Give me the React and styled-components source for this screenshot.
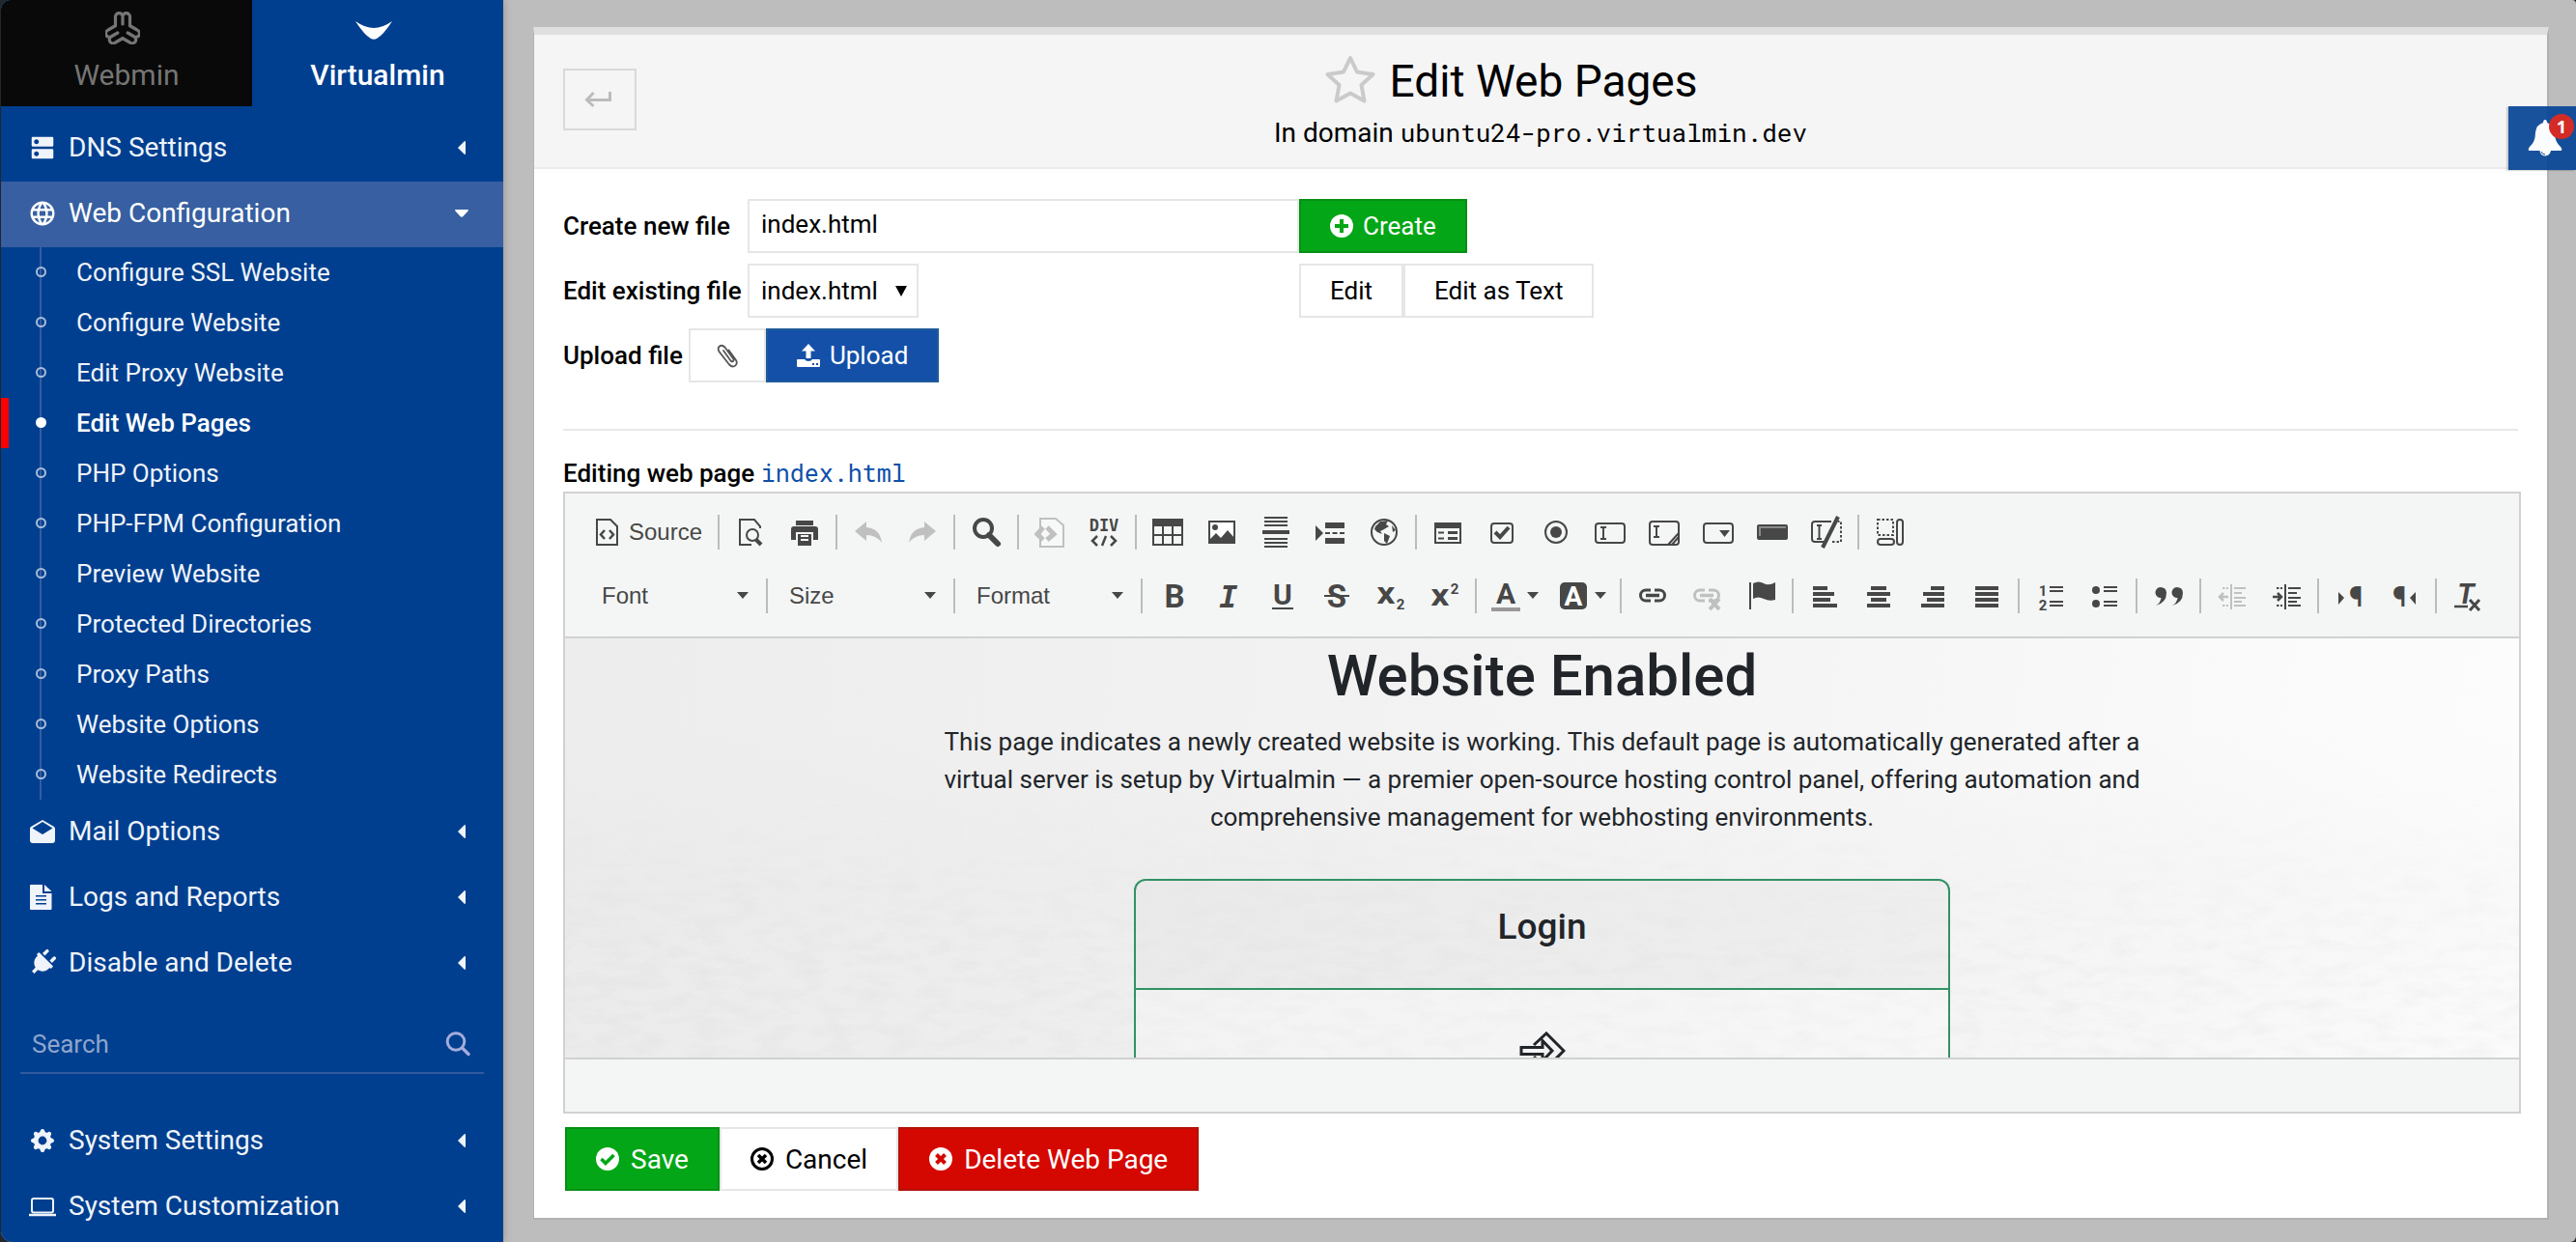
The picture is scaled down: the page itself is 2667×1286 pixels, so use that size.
import React from "react";
import styled, { createGlobalStyle, css } from "styled-components";
import { MdDns, MdLanguage } from "react-icons/md";
import { FaPlug } from "react-icons/fa";
import { BsGearFill } from "react-icons/bs";

const sans = `Roboto, "Liberation Sans", sans-serif`;
const mono = `"Roboto Mono", "DejaVu Sans Mono", monospace`;
const ink = "#474747";

const GlobalStyle = createGlobalStyle`
  *, *::before, *::after { box-sizing: border-box; }
  body { margin: 0; background: #20272e; font-family: ${sans}; font-size: 26px; color: #000; }
  button, input, select { font: inherit; color: inherit; border-radius: 0; margin: 0; }
  button { cursor: pointer; }
  a { color: inherit; text-decoration: none; }
  svg { display: block; flex: none; }
`;

/* ---------- shell ---------- */

const Shell = styled.div`
  display: flex;
  min-height: 100vh;
  margin-left: 1px;
  background: #bdbdbd;
  border-radius: 10px 4px 6px 12px;
  overflow: hidden;
`;

const Sidebar = styled.aside`
  flex: none;
  width: 520px;
  background: #003f8f;
  color: #eff3fa;
  box-shadow: 0 0 8px rgba(0, 0, 0, 0.25);
`;

const Main = styled.main`
  flex: 1;
  min-width: 0;
  padding: 28px 28px 22px 31px;
`;

/* ---------- sidebar ---------- */

const Tabs = styled.div`
  display: grid;
  grid-template-columns: 1fr 1fr;
  margin-bottom: 10px;
`;

const Tab = styled.a`
  display: flex;
  flex-direction: column;
  align-items: center;
  height: 110px;
  padding-top: 12px;
  font-size: 30px;
  line-height: 36px;
  font-weight: ${(p) => (p.$active ? 500 : 400)};
  color: ${(p) => (p.$active ? "#fff" : "#757575")};
  background: ${(p) => (p.$active ? "transparent" : "#090909")};
  svg {
    margin: 0 8px 14px 0;
  }
`;

const List = styled.ul`
  list-style: none;
  margin: 0;
  padding: 0;
`;

const Group = styled.button`
  display: flex;
  align-items: center;
  width: 100%;
  height: 68px;
  padding: 0 36px 3px 30px;
  border: 0;
  font-size: 28px;
  text-align: left;
  color: ${(p) => (p.$open ? "#fff" : "inherit")};
  background: ${(p) => (p.$open ? "#375fa1" : "transparent")};
`;

const GroupIcon = styled.span`
  display: flex;
  justify-content: center;
  width: 26px;
  margin-right: 14px;
`;

const GroupLabel = styled.span`
  flex: 1;
`;

const SubList = styled(List)`
  background: linear-gradient(#345d9f, #345d9f) 40px 0 / 2px 100% no-repeat;
`;

const SubLink = styled.a`
  display: flex;
  align-items: center;
  height: 52px;
  padding: 0 0 1px ${(p) => (p.$current ? 28 : 36)}px;
  border-left: ${(p) => (p.$current ? "8px solid #f00" : "0")};
  font-weight: ${(p) => (p.$current ? 500 : 400)};
  color: ${(p) => (p.$current ? "#fff" : "inherit")};
`;

const Bullet = styled.span`
  width: 11px;
  height: 11px;
  margin-right: 31px;
  border: 2px solid ${(p) => (p.$current ? "#fff" : "#a9bcd9")};
  border-radius: 50%;
  background: ${(p) => (p.$current ? "#fff" : "transparent")};
`;

const SearchBox = styled.label`
  display: flex;
  align-items: center;
  height: 60px;
  margin: 20px 20px 36px;
  padding: 0 14px 0 12px;
  border-bottom: 2px solid #315a9e;
  color: #a3addb;
`;

const SearchInput = styled.input`
  flex: 1;
  min-width: 0;
  padding: 0;
  border: 0;
  outline: 0;
  background: transparent;
  color: #fff;
  &::placeholder {
    color: #8da5cd;
    opacity: 1;
  }
`;

/* ---------- panel ---------- */

const Panel = styled.section`
  background: #fff;
  border: solid #b1b1b1;
  border-width: 8px 2px 2px 1px;
  border-top-color: #dfdfdf;
`;

const PanelHeader = styled.header`
  display: grid;
  grid-template-columns: 76px 1fr 76px;
  padding: 18px 30px 16px;
  background: #f5f5f5;
  border-bottom: 2px solid #ebebeb;
`;

const BackButton = styled.button`
  display: grid;
  place-items: center;
  height: 64px;
  margin-top: 17px;
  padding: 0 4px 0 0;
  border: 2px solid #d9d9d9;
  background: transparent;
`;

const Heading = styled.div`
  text-align: center;
`;

const Title = styled.h1`
  display: flex;
  align-items: center;
  justify-content: center;
  gap: 14px;
  margin: 0 62px 0 0;
  font-size: 46px;
  line-height: 60px;
  font-weight: 400;
`;

const Domain = styled.p`
  height: 39px;
  margin: 4px 0 0;
  font-size: 28px;
  line-height: 39px;
`;

const Mono = styled.span`
  font-family: ${mono};
  font-size: 26px;
  line-height: 1;
`;

const Body = styled.div`
  padding: 31px 30px 28px;
`;

const FormGrid = styled.form`
  display: grid;
  grid-template-columns: 191px 571px 1fr;
  row-gap: 11px;
  align-items: center;
`;

const Label = styled.label`
  font-weight: 500;
`;

const TextInput = styled.input`
  width: 100%;
  height: 56px;
  padding: 0 12px 4px;
  border: 2px solid #e6e6e6;
  outline: 0;
  background: #fff;
`;

const SelectWrap = styled.span`
  display: grid;
  align-items: center;
  justify-self: start;
  > * {
    grid-area: 1 / 1;
  }
  svg {
    justify-self: end;
    margin-right: 12px;
    pointer-events: none;
  }
`;

const Select = styled.select`
  appearance: none;
  width: 177px;
  height: 56px;
  padding: 0 40px 0 12px;
  border: 2px solid #e6e6e6;
  background: #fff;
`;

const Row = styled.div`
  display: flex;
  align-items: center;
  grid-column: ${(p) => (p.$full ? "1 / -1" : "auto")};
  gap: ${(p) => (p.$full ? 6 : 0)}px;
`;

const tones = {
  plain: css`
    background: #fff;
    border-color: #e6e6e6;
    color: #000;
  `,
  green: css`
    background: #03a616;
    border-color: #078f15;
    color: #fff;
  `,
  blue: css`
    background: #1450a8;
    border-color: #1f5b9a;
    color: #fff;
  `,
  red: css`
    background: #d50800;
    border-color: #b11208;
    color: #fff;
  `,
};

const Button = styled.button`
  display: flex;
  align-items: center;
  justify-content: center;
  gap: ${(p) => (p.$large ? 12 : 10)}px;
  height: ${(p) => (p.$large ? 66 : 56)}px;
  padding: 0 ${(p) => (p.$compact ? 27 : 30)}px;
  border: 2px solid;
  font-size: ${(p) => (p.$large ? 28 : 26)}px;
  ${(p) => tones[p.$tone || "plain"]}
  & + & {
    margin-left: ${(p) => (p.$large ? 0 : -2)}px;
  }
`;

const Rule = styled.hr`
  margin: 48px 0 27px;
  border: 0;
  border-top: 2px solid #e9e9e9;
`;

const EditingLine = styled.p`
  height: 36px;
  margin: 0;
  font-weight: 500;
  line-height: 34px;
`;

const FileLink = styled.a`
  font-family: ${mono};
  font-size: 25px;
  line-height: 1;
  font-weight: 400;
  color: #0d50a8;
`;

const Actions = styled.div`
  display: flex;
  margin: 14px 0 0 2px;
`;

/* ---------- editor ---------- */

const Editor = styled.div`
  margin-right: -3px;
  border: 2px solid #d1d1d1;
`;

const Toolbar = styled.div`
  padding: 7px 20px 9px;
  background: #f4f6f5;
  border-bottom: 2px solid #d1d1d1;
  color: ${ink};
  font-family: "Liberation Sans", sans-serif;
  font-size: 24px;
`;

const ToolRow = styled.div`
  display: flex;
  align-items: center;
  height: 66px;
`;

const Tool = styled.button`
  display: flex;
  align-items: center;
  justify-content: center;
  gap: 6px;
  flex: none;
  width: ${(p) => p.$width || 56}px;
  height: 56px;
  padding: 0;
  border: 0;
  background: transparent;
  opacity: ${(p) => (p.$off ? 0.3 : 1)};
`;

const SourceTool = styled(Tool)`
  justify-content: flex-start;
  gap: 8px;
  width: 134px;
  padding-left: 8px;
`;

const Combo = styled(Tool)`
  justify-content: space-between;
  width: 184px;
  padding: 0 14px 0 18px;
`;

const Separator = styled.span`
  flex: none;
  width: 2px;
  height: 36px;
  margin: 0 4px;
  background: #bcbcbc;
`;

const Canvas = styled.div`
  position: relative;
  height: 434px;
  overflow: hidden;
  text-align: center;
  color: #212529;
  background: linear-gradient(100deg, #ededed 0%, #f2f2f2 40%, #f6f6f6 65%, #fdfdfd 100%);
`;

const Backdrop = styled.svg`
  position: absolute;
  inset: 0;
  width: 100%;
  height: 100%;
`;

const Page = styled.div`
  position: relative;
`;

const PageTitle = styled.h2`
  margin: 0;
  padding-top: 3px;
  font-size: 60px;
  line-height: 72px;
  font-weight: 500;
`;

const Lead = styled.p`
  max-width: 1260px;
  margin: 13px auto 44px;
  line-height: 39px;
`;

const Card = styled.div`
  width: 845px;
  height: 400px;
  margin: 0 auto;
  border: 2px solid #329265;
  border-radius: 12px;
  background: rgba(255, 255, 255, 0.25);
  overflow: hidden;
  svg {
    margin: 43px auto 0;
  }
`;

const CardTitle = styled.h3`
  margin: 0;
  padding: 26px 0 41px;
  font-size: 37px;
  line-height: 44px;
  font-weight: 500;
  background: rgba(0, 0, 0, 0.03);
  border-bottom: 2px solid #329265;
`;

const EditorFooter = styled.div`
  height: 56px;
  background: #f4f6f5;
  border-top: 2px solid #d1d1d1;
`;

/* ---------- notification ---------- */

const BellTab = styled.button`
  position: absolute;
  top: 110px;
  right: 0;
  display: grid;
  place-items: center;
  width: 70px;
  height: 66px;
  padding: 0 0 0 6px;
  border: 0;
  background: rgba(7, 69, 148, 0.93);
  box-shadow: -2px 1px 1px rgba(0, 0, 0, 0.15);
`;

const Badge = styled.span`
  position: absolute;
  top: 8px;
  right: 2px;
  width: 26px;
  height: 26px;
  border-radius: 50%;
  background: #d32b26;
  color: #fff;
  font: 700 18px/26px "Open Sans", ${sans};
  text-align: center;
`;

/* ---------- drawings ---------- */

const lobe = "M9.5 14.5V6.5A3.8 4.2 0 0 1 17 5A3.8 4.2 0 0 1 24.5 6.5V14.5M17 6V13";

const WebminLogo = () => (
  <svg width="36" height="34" viewBox="-1 0 36 34" fill="none" stroke="currentColor" strokeWidth="3.2" strokeLinecap="round" strokeLinejoin="round">
    {[0, 120, 240].map((a) => (
      <path key={a} d={lobe} transform={`rotate(${a} 17 19)`} />
    ))}
  </svg>
);

const VirtualminLogo = () => (
  <svg width="38" height="34" viewBox="0 0 38 34" fill="currentColor">
    <path d="M0 10Q10 17 19 17T38 10Q29 24 22 28Q19 29.500 16 28Q9 24 0 10Z" />
  </svg>
);

const MailIcon = () => (
  <svg width="26" height="26" viewBox="0 0 26 26" fill="currentColor">
    <path fillRule="evenodd" d="M13 1L25 8Q26 9 26 10V22Q26 25 23 25H3Q0 25 0 22V10Q0 9 1 8ZM2.500 9.500L13 16L23.500 9.500L13 3Z" />
  </svg>
);

const DocIcon = () => (
  <svg width="26" height="26" viewBox="0 0 26 26" fill="currentColor">
    <path fillRule="evenodd" d="M1 0H13V9H22.500V25Q22.500 26 21.500 26H1Q0 26 0 25V1Q0 0 1 0ZM6 11H17V12.500H6ZM6 15H17V16.500H6ZM6 19H17V20.500H6Z" />
    <path d="M15 0L22.500 7H15Z" />
  </svg>
);

const LaptopIcon = () => (
  <svg width="28" height="22" viewBox="0 0 28 22" fill="none" stroke="currentColor" strokeWidth="2">
    <rect x="3" y="3" width="22" height="14.500" rx="2" />
    <path d="M0 20H28" strokeWidth="2.500" />
  </svg>
);

const SearchIcon = () => (
  <svg width="26" height="26" viewBox="0 0 26 26" fill="none" stroke="currentColor" strokeWidth="3" strokeLinecap="round">
    <circle cx="11" cy="10.500" r="8.800" />
    <path d="M17.500 17L24 23.500" strokeWidth="3.400" />
  </svg>
);

const CaretLeft = () => (
  <svg width="14" height="14" viewBox="-3 0 14 14" fill="currentColor">
    <path d="M7 0Q8 0 8 1V13Q8 14 7 14L0 7Z" />
  </svg>
);

const CaretDown = () => (
  <svg width="14" height="8" viewBox="0 0 14 8" fill="currentColor">
    <path d="M0 1Q0 0 1 0H13Q14 0 14 1L8.500 7Q7 8.500 5.500 7Z" />
  </svg>
);

const SmallCaret = () => (
  <svg width="12" height="8" viewBox="0 0 12 8" fill="currentColor">
    <path d="M0 0H12L6 7Z" />
  </svg>
);

const BackIcon = () => (
  <svg width="28" height="18" viewBox="0 0 28 18" fill="none" stroke="#bcbcbc" strokeWidth="3">
    <path d="M26.500 1V9.500H3M9.500 2L2.500 9.500L9.500 16" />
  </svg>
);

const StarIcon = () => (
  <svg width="54" height="52" viewBox="0 2 54 52" fill="none" stroke="#cacaca" strokeWidth="4" strokeLinejoin="round">
    <path d="M27 4L34 18.500L50.500 21L38.500 32L41.500 48.500L27 40.500L12.500 48.500L15.500 32L3.500 21L20 18.500Z" />
  </svg>
);

const Disc = ({ children }) => (
  <svg width="24" height="24" viewBox="0 0 24 24">
    <circle cx="12" cy="12" r="12" fill="#fff" />
    <g fill="none" strokeWidth="4">{children}</g>
  </svg>
);

const PlusDisc = () => <Disc><path d="M12 5V19M5 12H19" stroke="#03a616" /></Disc>;
const CheckDisc = () => <Disc><path d="M5.500 12L10 16.500L18.500 8" stroke="#03a616" strokeWidth="3.600" /></Disc>;
const CrossDisc = () => <Disc><path d="M7.500 7.500L16.500 16.500M16.500 7.500L7.500 16.500" stroke="#d50800" /></Disc>;
const CrossRing = () => (
  <svg width="24" height="24" viewBox="0 0 24 24" fill="none" stroke="currentColor">
    <circle cx="12" cy="12" r="10.500" strokeWidth="3" />
    <path d="M8 8L16 16M16 8L8 16" strokeWidth="3.600" />
  </svg>
);

const UploadIcon = () => (
  <svg width="24" height="24" viewBox="0 0 24 24" fill="currentColor">
    <path d="M12 0L19 7.500H14.500V15H9.500V7.500H5Z" />
    <path fillRule="evenodd" d="M1 16H8Q9 18 12 18T16 16H23Q24 16 24 17V23Q24 24 23 24H1Q0 24 0 23V17Q0 16 1 16ZM16 20V22H18V20ZM20 20V22H22V20Z" />
  </svg>
);

const ClipIcon = () => (
  <svg width="22" height="26" viewBox="0 0 22 26" fill="none" stroke="#555" strokeWidth="1.800" strokeLinecap="round">
    <path d="M7 8L14.500 18.500Q16 20 17 19Q18.200 18 17 16.300L8.500 4.500Q5.500 1.500 3 3.500Q0.500 5.500 2.500 9L13 22.500Q16.500 26 19.500 23.300Q22 21 19.700 17.500L12.500 7.500" />
  </svg>
);

const BellIcon = () => (
  <svg width="36" height="38" viewBox="0 0 36 38" fill="#fbfcfe">
    <path d="M16 3Q16 0 18 0T20 3Q27 5 28 13Q28 23 34 28Q36 30 35 32H24Q23 37 18 37.500Q13 37 12.500 32H1Q0 30 2 28Q8 23 8 13Q9 5 16 3Z" />
    <path d="M14 33Q15 36 18 36" fill="none" stroke="#1c509a" strokeWidth="1" />
  </svg>
);

const LoginIcon = () => (
  <svg width="48" height="40" viewBox="0 0 48 40" fill="none" stroke="#212529" strokeWidth="3">
    <path d="M15 14L28 2L46 20L28 38L15 26" />
    <path d="M2 16.500H24V9.500L34 20L24 30.500V23.500H2Z" />
  </svg>
);

/* Toolbar glyphs share one 32-unit grid. */
const GlyphSvg = styled.svg`
  overflow: visible;
`;

const Glyph = ({ children, w = 32 }) => (
  <GlyphSvg width={w} height="32" viewBox={`0 0 ${w} 32`} fill="none" stroke={ink} strokeWidth="2">
    {children}
  </GlyphSvg>
);

const Letter = ({ x = 17, y = 28, size = 33, font = "Roboto", fill = ink, children, ...rest }) => (
  <text x={x} y={y} fontSize={size} fontFamily={`${font}, sans-serif`} fontWeight="700" textAnchor="middle" fill={fill} stroke="none" {...rest}>
    {children}
  </text>
);

const Solid = (props) => <path fill={ink} stroke="none" {...props} />;
const beam = "M6 9H11M8.500 9V23M6 23H11";
const chain = (
  <g strokeWidth="3">
    <path d="M14 10H9A5.500 5.500 0 0 0 9 21H14M18 10H23A5.500 5.500 0 0 1 23 21H18" />
    <path d="M9 15.500H23" strokeWidth="3.500" />
  </g>
);
const bars = (rows) => rows.map(([x, w], i) => <Solid key={i} d={`M${x} ${6 + i * 6}h${w}v4h${-w}z`} />);

const glyphs = {
  source: <><path d="M5 3H19L26 10V29H5Z" /><path d="M13 14L9 18.500L13 23M18 14L22 18.500L18 23" strokeWidth="2.500" /></>,
  preview: <><path d="M17 29H5V3H20L26 10V12" /><circle cx="18" cy="19" r="6" /><path d="M22 24L27 29" strokeWidth="4" /></>,
  print: <><Solid d="M7 4H25V9H7ZM2 13Q2 10 5 10H27Q30 10 30 13V24H25V16H7V24H2Z" /><Solid d="M9 18H23V30H9Z" /><path d="M12 20H20M12 24H20" stroke="#f4f6f5" /></>,
  undo: <Solid d="M14 5V11Q28 12 30 27Q24 19 14 19V25L2 15Z" />,
  redo: <Solid d="M18 5V11Q4 12 2 27Q8 19 18 19V25L30 15Z" />,
  find: <><circle cx="13" cy="12" r="9" strokeWidth="4" /><path d="M19 19L28 28" strokeWidth="6" strokeLinecap="round" /></>,
  templates: <><path d="M6 2H22L30 9V31H6Z" fill="#fff" /><path d="M9 11L3 18L9 24M13 11L20 18L13 24" strokeWidth="5" /></>,
  div: <><Letter x={16} y={15} size={17} font="DejaVu Sans Mono">DIV</Letter><path d="M9 20L4 25L9 30M23 20L28 25L23 30M18 20L14 30" strokeWidth="2.500" /></>,
  table: <><Solid d="M0 2H32V10H0Z" /><path d="M1 3V29H31V3M11 10V29M21 10V29M1 19H31" /></>,
  image: <><path d="M3 5H29V27H3Z" fill="#fff" /><circle cx="9" cy="11" r="3" fill={ink} stroke="none" /><Solid d="M3 27V24L10 17L15 22L22 14L29 22V27Z" /></>,
  rule: <><path d="M4 1H28M4 5H28M4 9H28M4 23H28M4 27H28M4 31H28" /><path d="M2 16H30" strokeWidth="4" /></>,
  pageBreak: <><Solid d="M1 9L9 17L1 25Z" /><Solid d="M11 6H31V12H11ZM11 22H31V28H11Z" /><path d="M11 17H31" strokeDasharray="5 2.500" /></>,
  globe: <><circle cx="16" cy="16" r="13" /><Solid d="M7 10L12 5L20 4L18 8L21 10L16 13L12 15L14 18L9 16L6 13ZM16 17L22 20L19 28L16 25ZM24 9L28 14L25 16Z" /></>,
  form: <><path d="M3 7H29V27H3Z" /><Solid d="M2 6H30V12H2ZM16 15H26V18H16ZM16 21H26V24H16Z" /><path d="M6 16.500H12M6 22.500H12" /></>,
  checkbox: <><rect x="5" y="7" width="22" height="20" rx="3" /><path d="M9 16L14 21L23 11" strokeWidth="4" /></>,
  radio: <><circle cx="16" cy="16" r="11" /><circle cx="16" cy="16" r="6" fill={ink} stroke="none" /></>,
  textField: <><rect x="1" y="7" width="30" height="20" rx="3" /><path d="M6 11H12M9 11V23M6 23H12" /></>,
  textarea: <><rect x="1" y="5" width="30" height="24" rx="3" /><path d="M5 10H11M8 10V21M5 21H11M20 29L31 17M24 29L31 21" /></>,
  select: <><rect x="1" y="7" width="30" height="20" rx="3" /><Solid d="M17 14H28L22.500 21Z" /></>,
  button: <><Solid d="M2 8H30Q32 8 32 10V22Q32 24 30 24H2Q0 24 0 22V10Q0 8 2 8Z" /><path d="M3 20V11H30" stroke="#8a8a8a" /></>,
  hidden: <><path d="M21 5H4Q1 5 1 8V23Q1 26 4 26H13" /><path d="M22 26H31V5H28" strokeDasharray="2.500 2" /><path d={beam} /><path d="M28 0L12 32" strokeWidth="4" /></>,
  blocks: <><path d="M3 3H19V19H3Z" strokeDasharray="2.500 2" /><rect x="3" y="23" width="17" height="6" rx="3" /><rect x="23" y="3" width="6" height="26" rx="3" /></>,
  bold: <Letter>B</Letter>,
  italic: <Letter font="DejaVu Sans Mono" fontStyle="italic" size={32}>I</Letter>,
  underline: <><Letter y={25} size={30}>U</Letter><path d="M6 29H28" /></>,
  strike: <><Letter>S</Letter><path d="M4 16H30" /></>,
  sub: <><Letter x={12} y={24} size={30} font="DejaVu Sans">x</Letter><Letter x={27} y={30} size={15}>2</Letter></>,
  sup: <><Letter x={12} y={26} size={30} font="DejaVu Sans">x</Letter><Letter x={27} y={14} size={15}>2</Letter></>,
  link: chain,
  unlink: <>{chain}<path d="M19 19L29 30M29 19L19 30" strokeWidth="4" /></>,
  flag: <><path d="M5 2V30" /><Solid d="M8 3Q14 0 19 3T31 2V20Q25 22 19 19T8 19Z" /></>,
  left: bars([[4, 15], [4, 22], [4, 18], [4, 25]]),
  center: bars([[8, 16], [4, 24], [8, 16], [4, 24]]),
  right: bars([[14, 14], [6, 22], [10, 18], [4, 24]]),
  justify: bars([[4, 24], [4, 24], [4, 24], [4, 24]]),
  numbers: <><Letter x={8} y={16} size={15}>1</Letter><Letter x={8} y={31} size={15}>2</Letter><path d="M15 7H29M15 11H29M15 22H29M15 26H29" /></>,
  bullets: <><circle cx="7" cy="10" r="4" fill={ink} stroke="none" /><circle cx="7" cy="24" r="4" fill={ink} stroke="none" /><path d="M15 7H29M15 11H29M15 22H29M15 26H29" /></>,
  quote: <Solid d="M7.500 7A5.500 5.500 0 1 0 8.500 18Q8 23 3 26Q14 23 14 13Q14 7 7.500 7ZM24.500 7A5.500 5.500 0 1 0 25.500 18Q25 23 20 26Q31 23 31 13Q31 7 24.500 7Z" />,
  outdent: <><path d="M15 4V30M18 8H30M18 13H26M18 18H30M18 22H26M18 26H30" /><path d="M6 8H12M6 26H12" strokeDasharray="2.500 1.500" /><path d="M3 17H12M7 13L3 17L7 21" strokeWidth="2.500" /></>,
  indent: <><path d="M15 4V30M18 8H31M18 13H27M18 18H31M18 22H27M18 26H31" /><path d="M6 8H12M6 26H12" strokeDasharray="2.500 1.500" /><path d="M2 17H11M7 13L11 17L7 21" strokeWidth="2.500" /></>,
  ltr: <><Solid d="M4 12L10 18L4 25Z" /><Letter x={22} y={27} size={29}>¶</Letter></>,
  rtl: <><Solid d="M28 12L22 18L28 25Z" /><Letter x={11} y={27} size={29}>¶</Letter></>,
  clear: <><Letter x={14} y={24} size={29} fontStyle="italic">T</Letter><path d="M2 27H16" strokeWidth="2.500" /><path d="M18 20L28 31M28 20L18 31" strokeWidth="3" /></>,
};

const ColorGlyph = () => (
  <Glyph>
    <Letter x={16} y={24} size={30}>A</Letter>
    <path d="M1 30H31" stroke="#9b9999" strokeWidth="4" />
  </Glyph>
);

const FillGlyph = () => (
  <Glyph>
    <rect x="2" y="2" width="28" height="28" rx="5" fill={ink} stroke="none" />
    <Letter x={16} y={26} size={28} fill="#fff">A</Letter>
  </Glyph>
);

/* ---------- data ---------- */

const pages = [
  "Configure SSL Website", "Configure Website", "Edit Proxy Website", "Edit Web Pages",
  "PHP Options", "PHP-FPM Configuration", "Preview Website", "Protected Directories",
  "Proxy Paths", "Website Options", "Website Redirects",
];

const disabled = new Set(["undo", "redo", "templates", "unlink", "outdent"]);

const insertTools = [
  ["preview", "print"], ["undo", "redo"], ["find"], ["templates", "div"],
  ["table", "image", "rule", "pageBreak", "globe"],
  ["form", "checkbox", "radio", "textField", "textarea", "select", "button", "hidden"],
  ["blocks"],
];

const paragraphTools = [
  ["link", "unlink", "flag"], ["left", "center", "right", "justify"], ["numbers", "bullets"],
  ["quote"], ["outdent", "indent"], ["ltr", "rtl"], ["clear"],
];

const ToolGroup = ({ names }) => (
  <>
    {names.map((n) => (
      <Tool key={n} type="button" aria-label={n} $off={disabled.has(n)}>
        <Glyph>{glyphs[n]}</Glyph>
      </Tool>
    ))}
  </>
);

const ToolGroups = ({ groups }) =>
  groups.map((names) => (
    <React.Fragment key={names[0]}>
      <Separator />
      <ToolGroup names={names} />
    </React.Fragment>
  ));

const TiltedPlug = styled(FaPlug)`
  transform: rotate(45deg);
`;

const NavGroup = ({ icon, label, open }) => (
  <Group type="button" $open={open} aria-expanded={!!open}>
    <GroupIcon>{icon}</GroupIcon>
    <GroupLabel>{label}</GroupLabel>
    {open ? <CaretDown /> : <CaretLeft />}
  </Group>
);

const SnowBackdrop = () => (
  <Backdrop aria-hidden="true">
    <defs>
      <filter id="snow" x="0" y="0" width="100%" height="100%">
        <feTurbulence type="fractalNoise" baseFrequency="0.03 0.08" numOctaves="4" seed="8" />
        <feColorMatrix values="0 0 0 0 0.5  0 0 0 0 0.5  0 0 0 0 0.5  0.5 0 0 0 -0.2" />
      </filter>
      <linearGradient id="fade" x1="0" y1="0" x2="0" y2="1">
        <stop offset="0.35" stopColor="#000" />
        <stop offset="0.8" stopColor="#fff" />
      </linearGradient>
      <linearGradient id="shade" x1="0" y1="0" x2="0" y2="1">
        <stop offset="0.2" stopColor="#888" stopOpacity="0" />
        <stop offset="0.6" stopColor="#888" stopOpacity="0.03" />
        <stop offset="1" stopColor="#888" stopOpacity="0.02" />
      </linearGradient>
      <mask id="ground">
        <rect width="100%" height="100%" fill="url(#fade)" />
      </mask>
    </defs>
    <rect width="100%" height="100%" fill="url(#shade)" />
    <g mask="url(#ground)">
      <rect width="100%" height="100%" filter="url(#snow)" opacity="0.4" />
    </g>
  </Backdrop>
);

export default function App() {
  return (
    <>
      <GlobalStyle />
      <Shell>
        <Sidebar>
          <Tabs>
            <Tab href="#webmin"><WebminLogo />Webmin</Tab>
            <Tab href="#virtualmin" $active><VirtualminLogo />Virtualmin</Tab>
          </Tabs>
          <nav>
            <List>
              <li><NavGroup icon={<MdDns size={30} />} label="DNS Settings" /></li>
              <li>
                <NavGroup icon={<MdLanguage size={30} />} label="Web Configuration" open />
                <SubList>
                  {pages.map((p) => (
                    <li key={p}>
                      <SubLink href="#page" $current={p === "Edit Web Pages"}>
                        <Bullet $current={p === "Edit Web Pages"} />
                        {p}
                      </SubLink>
                    </li>
                  ))}
                </SubList>
              </li>
              <li><NavGroup icon={<MailIcon />} label="Mail Options" /></li>
              <li><NavGroup icon={<DocIcon />} label="Logs and Reports" /></li>
              <li><NavGroup icon={<TiltedPlug size={28} />} label="Disable and Delete" /></li>
            </List>
            <SearchBox>
              <SearchInput type="search" placeholder="Search" aria-label="Search" />
              <SearchIcon />
            </SearchBox>
            <List>
              <li><NavGroup icon={<BsGearFill size={24} />} label="System Settings" /></li>
              <li><NavGroup icon={<LaptopIcon />} label="System Customization" /></li>
            </List>
          </nav>
        </Sidebar>

        <Main>
          <Panel>
            <PanelHeader>
              <BackButton type="button" aria-label="Back"><BackIcon /></BackButton>
              <Heading>
                <Title><StarIcon />Edit Web Pages</Title>
                <Domain>In domain <Mono>ubuntu24-pro.virtualmin.dev</Mono></Domain>
              </Heading>
            </PanelHeader>

            <Body>
              <FormGrid onSubmit={(e) => e.preventDefault()}>
                <Label htmlFor="new-file">Create new file</Label>
                <TextInput id="new-file" defaultValue="index.html" />
                <Row><Button $tone="green"><PlusDisc />Create</Button></Row>

                <Label htmlFor="existing-file">Edit existing file</Label>
                <SelectWrap>
                  <Select id="existing-file"><option>index.html</option></Select>
                  <svg width="12" height="12" viewBox="0 0 12 12"><path d="M0 1H12L6 12Z" /></svg>
                </SelectWrap>
                <Row>
                  <Button type="button">Edit</Button>
                  <Button type="button">Edit as Text</Button>
                </Row>

                <Row $full>
                  <Label htmlFor="attach">Upload file</Label>
                  <Row>
                    <Button id="attach" type="button" aria-label="Choose file" $compact><ClipIcon /></Button>
                    <Button type="button" $tone="blue"><UploadIcon />Upload</Button>
                  </Row>
                </Row>
              </FormGrid>

              <Rule />

              <EditingLine>Editing web page <FileLink href="#file">index.html</FileLink></EditingLine>
              <Editor>
                <Toolbar>
                  <ToolRow>
                    <SourceTool type="button"><Glyph w={30}>{glyphs.source}</Glyph>Source</SourceTool>
                    <ToolGroups groups={insertTools} />
                  </ToolRow>
                  <ToolRow>
                    {["Font", "Size", "Format"].map((c) => (
                      <React.Fragment key={c}>
                        <Combo type="button">{c}<SmallCaret /></Combo>
                        <Separator />
                      </React.Fragment>
                    ))}
                    <ToolGroup names={["bold", "italic", "underline", "strike", "sub", "sup"]} />
                    <Separator />
                    <Tool type="button" $width={70} aria-label="Text colour"><ColorGlyph /><SmallCaret /></Tool>
                    <Tool type="button" $width={70} aria-label="Background colour"><FillGlyph /><SmallCaret /></Tool>
                    <ToolGroups groups={paragraphTools} />
                  </ToolRow>
                </Toolbar>
                <Canvas>
                  <SnowBackdrop />
                  <Page>
                    <PageTitle>Website Enabled</PageTitle>
                    <Lead>
                      This page indicates a newly created website is working. This default page is automatically
                      generated after a virtual server is setup by Virtualmin — a premier open-source hosting control
                      panel, offering automation and comprehensive management for webhosting environments.
                    </Lead>
                    <Card>
                      <CardTitle>Login</CardTitle>
                      <LoginIcon />
                    </Card>
                  </Page>
                </Canvas>
                <EditorFooter />
              </Editor>

              <Actions>
                <Button type="button" $large $tone="green"><CheckDisc />Save</Button>
                <Button type="button" $large><CrossRing />Cancel</Button>
                <Button type="button" $large $tone="red"><CrossDisc />Delete Web Page</Button>
              </Actions>
            </Body>
          </Panel>
        </Main>
        <BellTab type="button" aria-label="Notifications"><BellIcon /><Badge>1</Badge></BellTab>
      </Shell>
    </>
  );
}
